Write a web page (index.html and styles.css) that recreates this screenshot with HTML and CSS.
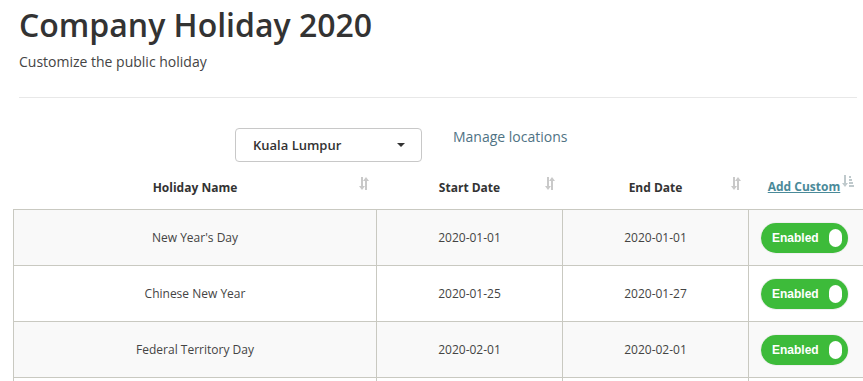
FILE: index.html
```html
<!DOCTYPE html>
<html lang="en">
<head>
    <meta charset="UTF-8">
    <meta name="viewport" content="width=device-width, initial-scale=1.0">
    <title>Company Holiday 2020</title>
    <link rel="stylesheet" href="styles.css">
</head>
<body>
    <div class="page">
        <header class="page-head">
            <h1 class="tit-page">Company Holiday 2020</h1>
            <p class="sub-page">Customize the public holiday</p>
        </header>
        <div class="divide"></div>

        <div class="toolbar">
            <button class="select-location">
                <span>Kuala Lumpur</span>
                <span class="caret"></span>
            </button>
            <a class="link-manage" href="#">Manage locations</a>
        </div>

        <table class="tbl-holiday">
            <colgroup>
                <col class="col-name">
                <col class="col-date">
                <col class="col-date">
                <col class="col-status">
            </colgroup>
            <thead>
                <tr>
                    <th><span>Holiday Name</span><i class="sort"></i></th>
                    <th><span>Start Date</span><i class="sort"></i></th>
                    <th><span>End Date</span><i class="sort"></i></th>
                    <th class="th-custom"><a href="#">Add Custom</a><i class="sort-amount"></i></th>
                </tr>
            </thead>
            <tbody>
                <tr>
                    <td>New Year's Day</td>
                    <td>2020-01-01</td>
                    <td>2020-01-01</td>
                    <td><button class="toggle">Enabled<span class="knob"></span></button></td>
                </tr>
                <tr>
                    <td>Chinese New Year</td>
                    <td>2020-01-25</td>
                    <td>2020-01-27</td>
                    <td><button class="toggle">Enabled<span class="knob"></span></button></td>
                </tr>
                <tr>
                    <td>Federal Territory Day</td>
                    <td>2020-02-01</td>
                    <td>2020-02-01</td>
                    <td><button class="toggle">Enabled<span class="knob"></span></button></td>
                </tr>
                <!-- next row only peeks in at the bottom edge -->
                <tr class="row-more">
                    <td></td>
                    <td></td>
                    <td></td>
                    <td></td>
                </tr>
            </tbody>
        </table>
    </div>
</body>
</html>
```

FILE: styles.css
```css
html, body {
    margin: 0;
    background: #fff;
    overflow: hidden;
}
body {
    font-family: 'Open Sans', sans-serif;
    color: #444;
}
.page {
    padding: 0 0 0 13px;
}
.page-head {
    padding: 3px 0 0 6px;
}
.tit-page {
    margin: 0;
    font-size: 32px;
    font-weight: 600;
    line-height: 44px;
    color: #333;
}
.sub-page {
    margin: 5px 0 0;
    font-size: 14px;
    line-height: 19px;
    color: #444;
}
.divide {
    margin: 26px 6px 0 6px;
    height: 1px;
    background: #e8e8e8;
}
.toolbar {
    display: flex;
    align-items: flex-start;
    margin: 30px 0 0 222px;
}
.select-location {
    display: flex;
    align-items: center;
    justify-content: space-between;
    width: 187px;
    height: 34px;
    padding: 0 16px 0 17px;
    background: #fff;
    border: 1px solid #c8c8c8;
    border-radius: 4px;
    font-family: 'Open Sans', sans-serif;
    font-size: 13px;
    font-weight: 600;
    color: #333;
}
.caret {
    width: 0;
    height: 0;
    border-left: 4px solid transparent;
    border-right: 4px solid transparent;
    border-top: 4px solid #333;
}
.link-manage {
    margin: -1px 0 0 31px;
    font-size: 14px;
    line-height: 20px;
    color: #4f7384;
    text-decoration: none;
}
.tbl-holiday {
    width: 851px;
    margin-top: 11px;
    border-collapse: collapse;
    font-size: 12px;
}
.col-name { width: 363px; }
.col-date { width: 186px; }
.tbl-holiday th {
    position: relative;
    height: 28px;
    padding: 0 0 8px;
    font-size: 12px;
    font-weight: 700;
    color: #333;
    text-align: center;
    vertical-align: middle;
}
.sort {
    position: absolute;
    right: 8px;
    top: 4px;
    width: 10px;
    height: 13px;
    background:
        linear-gradient(#c9c9c9, #c9c9c9) 2px 0 / 2px 9px no-repeat,
        linear-gradient(#c9c9c9, #c9c9c9) 6px 4px / 2px 9px no-repeat;
}
.sort::before,
.sort::after {
    content: '';
    position: absolute;
    width: 0;
    height: 0;
    border-left: 3px solid transparent;
    border-right: 3px solid transparent;
}
.sort::before {
    left: 0;
    top: 9px;
    border-top: 4px solid #c9c9c9;
}
.sort::after {
    left: 4px;
    top: 0;
    border-bottom: 4px solid #c9c9c9;
}
.th-custom a {
    position: relative;
    left: -2px;
    top: -1px;
    color: #4a8a99;
    text-decoration: underline;
}
.sort-amount {
    position: absolute;
    left: 94px;
    top: 2px;
    width: 12px;
    height: 12px;
    background:
        linear-gradient(#bfc9cc, #bfc9cc) 1px 0 / 2px 8px no-repeat,
        linear-gradient(#bfc9cc, #bfc9cc) 6px 1px / 2px 2px no-repeat,
        linear-gradient(#bfc9cc, #bfc9cc) 6px 4px / 3px 2px no-repeat,
        linear-gradient(#bfc9cc, #bfc9cc) 6px 7px / 4px 2px no-repeat,
        linear-gradient(#bfc9cc, #bfc9cc) 6px 10px / 5px 2px no-repeat;
}
.sort-amount::before {
    content: '';
    position: absolute;
    left: -1px;
    top: 8px;
    border-left: 3px solid transparent;
    border-right: 3px solid transparent;
    border-top: 4px solid #bfc9cc;
}
.tbl-holiday td {
    height: 55px;
    padding: 0;
    border: 1px solid #c9c9c1;
    text-align: center;
    vertical-align: middle;
    color: #444;
}
.tbl-holiday tbody tr:nth-child(odd) td {
    background: #f9f9f9;
}
.toggle {
    display: inline-flex;
    align-items: center;
    justify-content: space-between;
    width: 87px;
    height: 30px;
    margin-right: 3px;
    padding: 0 6px 0 11px;
    background: #3dbb3a;
    border: 0;
    border-radius: 15px;
    box-shadow: 0 0 0 1px #f0f0f0;
    font-family: 'Liberation Sans', Arial, sans-serif;
    font-size: 12px;
    font-weight: 700;
    color: #fff;
}
.knob {
    width: 13px;
    height: 18px;
    background: #fff;
    border-radius: 7px;
}
```
